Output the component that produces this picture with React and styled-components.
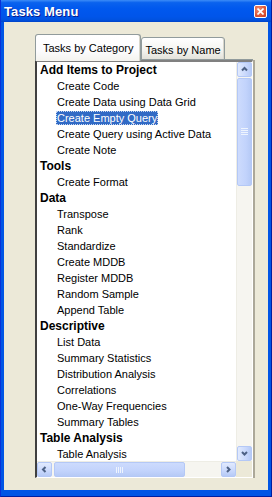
import React from "react";
import styled, { createGlobalStyle } from "styled-components";

const Global = createGlobalStyle`
  html, body { margin: 0; padding: 0; background: #ECE9D8; }
  body { width: 272px; height: 497px; overflow: hidden; font-family: "Liberation Sans", Arial, sans-serif; }
`;

const Window = styled.div`
  width: 272px;
  height: 497px;
  box-sizing: border-box;
  display: flex;
  flex-direction: column;
  background: #0055E5;
  border-left: 1px solid #0831D9;
  border-right: 1px solid #001EA0;
  border-bottom: 1px solid #001EA0;
`;

const TitleBar = styled.div`
  height: 22px;
  flex: none;
  display: flex;
  align-items: center;
  justify-content: space-between;
  padding: 0 4px 0 3px;
  background: linear-gradient(to bottom, #3C8CF7 0%, #0A62EE 12%, #0058EE 40%, #0055EA 75%, #0052E0 90%, #0043C8 100%);
`;

const Title = styled.span`
  color: #fff;
  font-weight: bold;
  font-size: 13px;
  letter-spacing: 0.1px;
  text-shadow: 1px 1px 0 #0A1E8C;
  padding-top: 1px;
`;

const CloseButton = styled.div`
  width: 13px;
  height: 13px;
  box-sizing: border-box;
  border: 1px solid #fff;
  border-radius: 2px;
  background: radial-gradient(circle at 35% 30%, #F08C70 0%, #E05A3C 55%, #C2381E 100%);
  display: flex;
  align-items: center;
  justify-content: center;
`;

const Client = styled.div`
  flex: 1;
  margin: 0 3px 6px 3px;
  background: #ECE9D8;
  padding: 11px 15px 12px 31px;
  display: flex;
  flex-direction: column;
  min-height: 0;
`;

const TabStrip = styled.div`
  display: flex;
  align-items: flex-end;
  height: 27px;
  flex: none;
  position: relative;
  z-index: 1;
`;

const Tab = styled.div`
  box-sizing: border-box;
  height: ${(p) => (p.$active ? "27px" : "23px")};
  padding: ${(p) => (p.$active ? "0 7px" : "2px 3px 0 3px")};
  margin-bottom: ${(p) => (p.$active ? "-1px" : "0")};
  display: flex;
  align-items: center;
  font-size: 11px;
  color: #000;
  border: 1px solid #919B9C;
  border-bottom: ${(p) => (p.$active ? "none" : "1px solid #919B9C")};
  border-radius: 3px 3px 0 0;
  background: ${(p) =>
    p.$active
      ? "linear-gradient(to bottom, #FFFFFF 0%, #FCFCFE 60%, #F4F3EE 100%)"
      : "linear-gradient(to bottom, #FFFFFF 0%, #F3F3EF 60%, #E3E2DA 100%)"};
  box-shadow: inset -1px 0 0 #D8D6CB;
`;

const Panel = styled.div`
  flex: 1;
  display: grid;
  grid-template-columns: 1fr 16px;
  grid-template-rows: 1fr 16px;
  border-top: 2px solid #808080;
  border-left: 2px solid #404040;
  border-right: 1px solid #FFFFFF;
  border-bottom: 1px solid #FFFFFF;
  box-shadow: 0 -1px 0 #919B9C, 2px 0 0 #ACA899;
  background: #fff;
  min-height: 0;
`;

const Tree = styled.div`
  overflow: hidden;
  background: #fff;
  min-height: 0;
`;

const Row = styled.div`
  height: 16px;
  display: flex;
  align-items: center;
  padding-left: ${(p) => (p.$heading ? "2px" : "19px")};
  white-space: nowrap;
`;

const Label = styled.span`
  font-size: ${(p) => (p.$heading ? "12px" : "11px")};
  line-height: 14px;
  padding: 0 1px;
  color: ${(p) => (p.$selected ? "#fff" : "#000")};
  background: ${(p) => (p.$selected ? "#316AC5" : "transparent")};
  font-weight: ${(p) => (p.$heading ? "bold" : "normal")};
  outline: ${(p) => (p.$selected ? "1px dotted #C8D8F0" : "none")};
  outline-offset: -1px;
`;

const VScroll = styled.div`
  display: flex;
  flex-direction: column;
  background: #F6F5F0;
  border-left: 1px solid #EEEDE5;
  min-height: 0;
`;

const HScroll = styled.div`
  display: flex;
  flex-direction: row;
  background: #F6F5F0;
  border-top: 1px solid #EEEDE5;
`;

const Corner = styled.div`
  background: #ECE9D8;
`;

const ArrowBtn = styled.div`
  flex: none;
  width: 15px;
  height: 15px;
  box-sizing: border-box;
  border: 1px solid #B4C8F6;
  border-radius: 2px;
  background: linear-gradient(${(p) => (p.$h ? "to bottom" : "to right")}, #E1EAFE 0%, #C9D8FC 60%, #B6CAF6 100%);
  display: flex;
  align-items: center;
  justify-content: center;
`;

const Thumb = styled.div`
  flex: none;
  box-sizing: border-box;
  border: 1px solid #B4C8F6;
  border-radius: 2px;
  background: linear-gradient(${(p) => (p.$h ? "to bottom" : "to right")}, #CDDBFD 0%, #C2D3FC 60%, #B6CAF6 100%);
  display: flex;
  align-items: center;
  justify-content: center;
  ${(p) => (p.$h ? "width: 131px; height: 15px; margin-left: 2px;" : "height: 108px; width: 15px; margin-top: 1px;")}
`;

const Track = styled.div`
  flex: 1;
`;

const Chevron = ({ dir }) => {
  const paths = {
    up: "M2 5.5 L4.5 3 L7 5.5",
    down: "M2 3 L4.5 5.5 L7 3",
    left: "M5.5 2 L3 4.5 L5.5 7",
    right: "M3 2 L5.5 4.5 L3 7",
  };
  return (
    <svg width="9" height="9" viewBox="0 0 9 9">
      <path d={paths[dir]} fill="none" stroke="#4D6185" strokeWidth="2" />
    </svg>
  );
};

const Grip = ({ h }) =>
  h ? (
    <svg width="8" height="6" viewBox="0 0 8 6">
      {[0, 2, 4, 6].map((x) => (
        <rect key={x} x={x} y="0" width="1" height="6" fill="#EEF4FE" />
      ))}
    </svg>
  ) : (
    <svg width="7" height="8" viewBox="0 0 7 8">
      {[0, 2, 4, 6].map((y) => (
        <rect key={y} x="0" y={y} width="7" height="1" fill="#EEF4FE" />
      ))}
    </svg>
  );

const items = [
  ["Add Items to Project", true],
  ["Create Code"],
  ["Create Data using Data Grid"],
  ["Create Empty Query", false, true],
  ["Create Query using Active Data"],
  ["Create Note"],
  ["Tools", true],
  ["Create Format"],
  ["Data", true],
  ["Transpose"],
  ["Rank"],
  ["Standardize"],
  ["Create MDDB"],
  ["Register MDDB"],
  ["Random Sample"],
  ["Append Table"],
  ["Descriptive", true],
  ["List Data"],
  ["Summary Statistics"],
  ["Distribution Analysis"],
  ["Correlations"],
  ["One-Way Frequencies"],
  ["Summary Tables"],
  ["Table Analysis", true],
  ["Table Analysis"],
];

export default function App() {
  return (
    <>
      <Global />
      <Window>
        <TitleBar>
          <Title>Tasks Menu</Title>
          <CloseButton>
            <svg width="7" height="7" viewBox="0 0 7 7">
              <path d="M0.5 0.5 L6.5 6.5 M6.5 0.5 L0.5 6.5" stroke="#fff" strokeWidth="1.6" />
            </svg>
          </CloseButton>
        </TitleBar>
        <Client>
          <TabStrip>
            <Tab $active>Tasks by Category</Tab>
            <Tab>Tasks by Name</Tab>
          </TabStrip>
          <Panel>
            <Tree>
              {items.map(([text, heading, selected], i) => (
                <Row key={i} $heading={heading}>
                  <Label $heading={heading} $selected={selected}>
                    {text}
                  </Label>
                </Row>
              ))}
            </Tree>
            <VScroll>
              <ArrowBtn>
                <Chevron dir="up" />
              </ArrowBtn>
              <Thumb>
                <Grip />
              </Thumb>
              <Track />
              <ArrowBtn>
                <Chevron dir="down" />
              </ArrowBtn>
            </VScroll>
            <HScroll>
              <ArrowBtn $h>
                <Chevron dir="left" />
              </ArrowBtn>
              <Thumb $h>
                <Grip h />
              </Thumb>
              <Track />
              <ArrowBtn $h>
                <Chevron dir="right" />
              </ArrowBtn>
            </HScroll>
            <Corner />
          </Panel>
        </Client>
      </Window>
    </>
  );
}
